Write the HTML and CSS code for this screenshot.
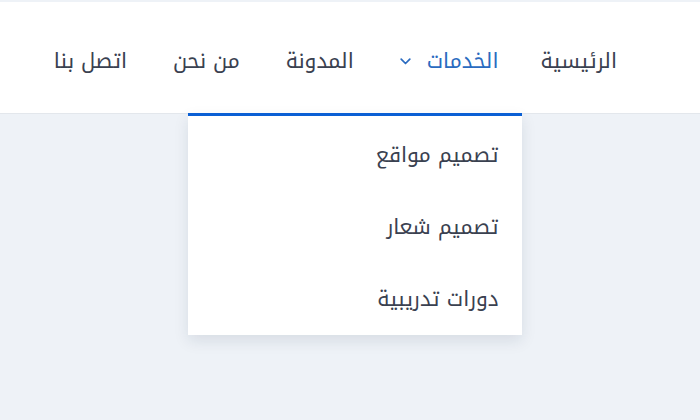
FILE: index.html
```html
<!DOCTYPE html>
<html lang="ar" dir="rtl">
<head>
<meta charset="utf-8">
<link rel="stylesheet" href="styles.css">
</head>
<body>
<header class="header">
  <nav class="nav">
    <ul class="menu">
      <li class="item"><a class="link" href="#">الرئيسية</a></li>
      <li class="item has-drop">
        <a class="link active" href="#">الخدمات
          <svg class="chev" width="11" height="7" viewBox="0 0 11 7"><path d="M1.2 1.2l4.3 4.3 4.3-4.3" fill="none" stroke="currentColor" stroke-width="1.7" stroke-linecap="round" stroke-linejoin="round"/></svg>
        </a>
        <ul class="drop">
          <li><a class="drop-link" href="#">تصميم مواقع</a></li>
          <li><a class="drop-link" href="#">تصميم شعار</a></li>
          <li><a class="drop-link" href="#">دورات تدريبية</a></li>
        </ul>
      </li>
      <li class="item"><a class="link" href="#">المدونة</a></li>
      <li class="item"><a class="link" href="#">من نحن</a></li>
      <li class="item"><a class="link" href="#">اتصل بنا</a></li>
    </ul>
  </nav>
</header>
</body>
</html>
```
FILE: styles.css
```css
html, body {
  margin: 0;
  padding: 0;
}
body {
  background: #eef2f7;
  font-family: "Noto Kufi Arabic", "DejaVu Sans", sans-serif;
  padding-top: 2px;
  height: 418px;
}
.header {
  background: #fff;
  border-bottom: 1px solid #e3e7ec;
  height: 111px;
}
.nav {
  padding-right: 60px;
  height: 100%;
}
.menu {
  list-style: none;
  margin: 0;
  padding: 0;
  display: flex;
  height: 100%;
}
.item {
  position: relative;
  display: flex;
}
.link {
  display: flex;
  align-items: center;
  gap: 16px;
  padding: 6px 23px 0;
  color: #3a4150;
  text-decoration: none;
  font-size: 21px;
}
.item:first-child .link {
  padding-left: 19px;
}
.link.active {
  color: #2a6bc0;
}
.chev {
  display: block;
  margin-top: 1px;
}
.drop {
  position: absolute;
  top: 100%;
  right: 0;
  width: 334px;
  margin: 0;
  padding: 3px 0 0;
  list-style: none;
  background: #fff;
  border-top: 3px solid #0a5fd4;
  box-shadow: 0 6px 14px rgba(20, 40, 70, 0.1);
}
.drop-link {
  display: block;
  padding: 0 23px;
  height: 72px;
  line-height: 72px;
  color: #3a4150;
  text-decoration: none;
  font-size: 21px;
}
```
